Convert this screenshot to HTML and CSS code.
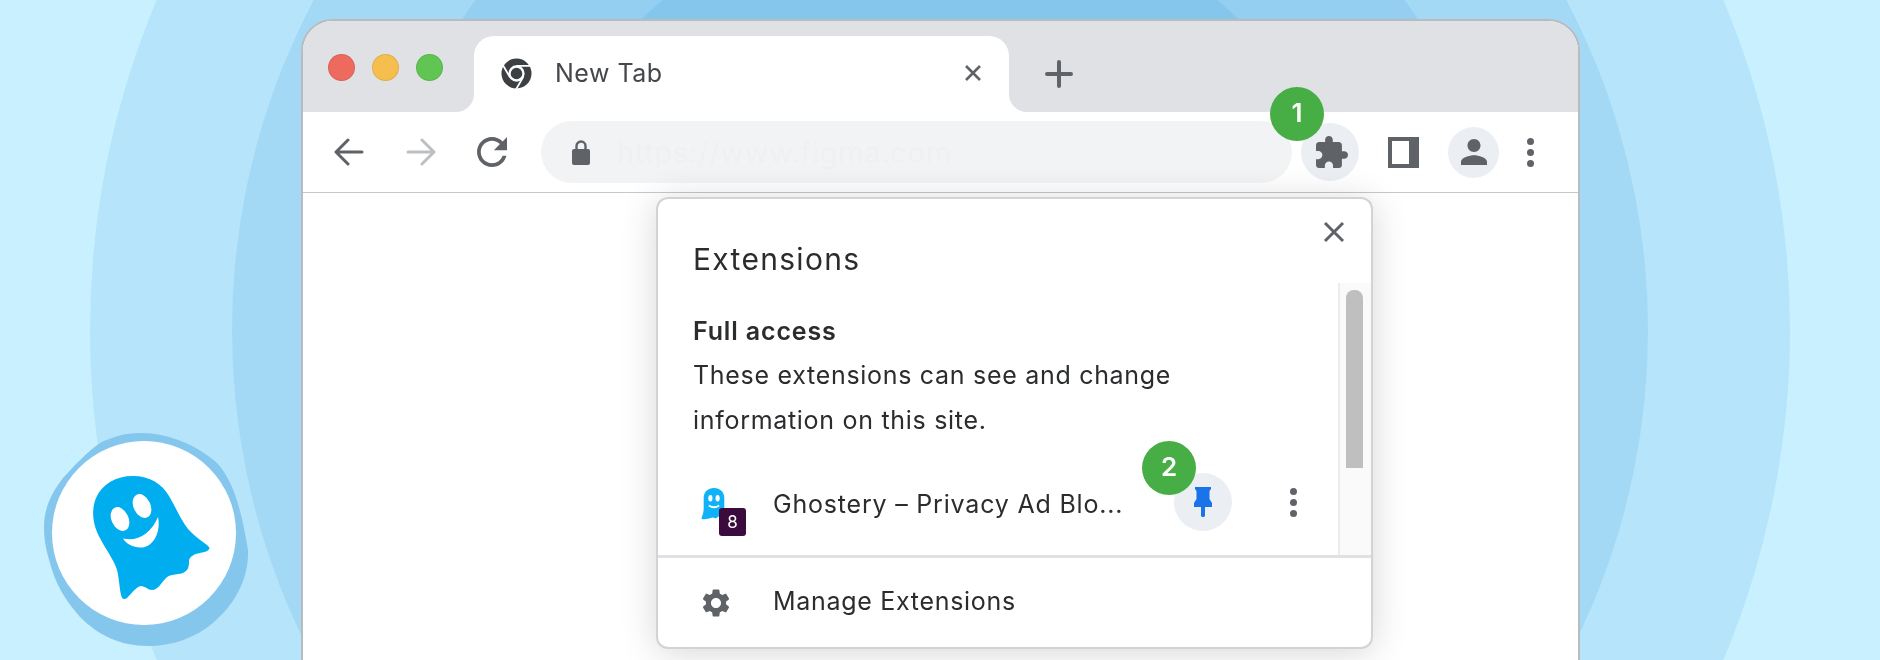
FILE: index.html
```html
<!DOCTYPE html>
<html lang="en">
<head>
    <meta charset="UTF-8">
    <title>Pin Ghostery in Chrome</title>
    <link rel="stylesheet" href="styles.css">
</head>
<body>
    <div class="ring ring-1"></div>
    <div class="ring ring-2"></div>
    <div class="ring ring-3"></div>
    <div class="ring ring-4"></div>

    <div class="window">
        <div class="tabstrip">
            <div class="lights">
                <span class="light light-red"></span>
                <span class="light light-yellow"></span>
                <span class="light light-green"></span>
            </div>
            <div class="tab-wrap">
                <div class="tab">
                    <svg class="chrome-icon" viewBox="0 0 32 32">
                        <circle cx="16" cy="16" r="15.5" fill="#3c4043"/>
                        <circle cx="16" cy="16" r="7.2" fill="#3c4043" stroke="#fff" stroke-width="2.4"/>
                        <g stroke="#fff" stroke-width="1.8">
                            <path d="M16 8.2H31"/>
                            <path d="M16 8.2H31" transform="rotate(120 16 16)"/>
                            <path d="M16 8.2H31" transform="rotate(240 16 16)"/>
                        </g>
                    </svg>
                    <span class="tab-title">New Tab</span>
                    <svg class="tab-close" viewBox="0 0 18 18"><path d="M2 2L16 16M16 2L2 16" stroke="#5f6368" stroke-width="2.6"/></svg>
                </div>
            </div>
            <div class="strip-rest">
                <svg class="new-tab" viewBox="0 0 28 28"><path d="M14 2V26M2 14H26" stroke="#5f6368" stroke-width="4" stroke-linecap="round"/></svg>
            </div>
        </div>

        <div class="toolbar">
            <svg class="nav-arrow" viewBox="0 0 30 28"><path d="M28 14H3M14 2L2 14L14 26" fill="none" stroke="#5f6368" stroke-width="3" stroke-linecap="round" stroke-linejoin="round"/></svg>
            <svg class="nav-arrow nav-forward" viewBox="0 0 30 28"><path d="M2 14H27M16 2L28 14L16 26" fill="none" stroke="#bdbfc1" stroke-width="3" stroke-linecap="round" stroke-linejoin="round"/></svg>
            <svg class="nav-reload" viewBox="4 4 16 16"><path fill="#5f6368" d="M17.65 6.35C16.2 4.9 14.21 4 12 4c-4.42 0-7.99 3.58-7.99 8s3.57 8 7.99 8c3.73 0 6.84-2.55 7.73-6h-2.08c-.82 2.33-3.04 4-5.65 4-3.31 0-6-2.69-6-6s2.69-6 6-6c1.66 0 3.14.69 4.22 1.78L13 11h7V4l-2.35 2.35z"/></svg>
            <div class="omnibox">
                <svg class="lock" viewBox="0 0 18 25"><path fill="#5f6368" d="M2 9h14a2 2 0 0 1 2 2v12a2 2 0 0 1-2 2H2a2 2 0 0 1-2-2V11a2 2 0 0 1 2-2z"/><path fill="none" stroke="#5f6368" stroke-width="2.4" d="M4.5 10V6a4.500 4.500 0 0 1 9 0v4"/></svg>
                <span class="url">https://www.figma.com</span>
            </div>
            <div class="round-btn puzzle-btn">
                <svg class="puzzle" viewBox="2 1 21 21"><path fill="#5f6368" d="M20.500 11H19V7c0-1.100-.9-2-2-2h-4V3.500C13 2.120 11.880 1 10.500 1S8 2.120 8 3.500V5H4c-1.100 0-1.990.9-1.990 2v3.800H3.500c1.490 0 2.700 1.210 2.700 2.700s-1.210 2.700-2.700 2.700H2V20c0 1.100.9 2 2 2h3.800v-1.500c0-1.490 1.210-2.700 2.700-2.700 1.490 0 2.700 1.210 2.700 2.700V22H17c1.100 0 2-.9 2-2v-4h1.500c1.380 0 2.500-1.120 2.500-2.500S21.880 11 20.500 11z"/></svg>
                <span class="step step-toolbar">1</span>
            </div>
            <div class="side-panel"></div>
            <div class="round-btn profile-btn">
                <svg class="person" viewBox="4 4 16 16"><path fill="#5f6368" d="M12 12c2.210 0 4-1.790 4-4s-1.790-4-4-4-4 1.790-4 4 1.790 4 4 4zm0 2c-2.670 0-8 1.340-8 4v2h16v-2c0-2.660-5.330-4-8-4z"/></svg>
            </div>
            <div class="dots toolbar-dots"><i></i><i></i><i></i></div>
        </div>

        <div class="popup">
            <svg class="popup-close" viewBox="0 0 22 22"><path d="M2 2L20 20M20 2L2 20" stroke="#5f6368" stroke-width="3"/></svg>
            <h2 class="popup-title">Extensions</h2>
            <div class="popup-scroll">
                <div class="popup-list">
                    <div class="section-title">Full access</div>
                    <p class="section-text">These extensions can see and change<br>information on this site.</p>
                    <div class="ext-row">
                        <div class="ext-icon">
                            <svg class="mini-ghost" viewBox="0 0 24 32">
                                <path fill="#0fb1f7" d="M12 0c6 0 10 4 10 10v11c0 2 2 3 2 5-2 1-4-1-6 0-2 2-3 4-6 3-2-1-4 1-7 1-3 0-5 1-5-1 1-3 2-5 2-10V10C2 4 6 0 12 0z"/>
                                <ellipse cx="8.500" cy="10" rx="2" ry="3.200" fill="#fff"/>
                                <ellipse cx="15.500" cy="10" rx="2" ry="3.200" fill="#fff"/>
                                <path d="M7 17c3 2 7 2 10 0" fill="none" stroke="#fff" stroke-width="1.800"/>
                            </svg>
                            <span class="ext-badge">8</span>
                        </div>
                        <span class="ext-name">Ghostery – Privacy Ad Blo...</span>
                        <div class="round-btn pin-btn">
                            <svg class="pin" viewBox="0 0 18 30"><path fill="#1a73e8" d="M1 0H17V2L15.500 4V12L18 16V20H11V29L10 30H8L7 29V20H0V16L2.500 12V4L1 2z"/></svg>
                            <span class="step step-pin">2</span>
                        </div>
                        <div class="dots row-dots"><i></i><i></i><i></i></div>
                    </div>
                </div>
                <div class="scroll-track"><div class="scroll-thumb"></div></div>
            </div>
            <div class="popup-footer">
                <svg class="gear" viewBox="2 2 20 20"><path fill="#5f6368" d="M19.140 12.940c.04-.3.06-.61.06-.94 0-.32-.02-.64-.07-.94l2.030-1.580c.18-.14.23-.41.12-.61l-1.920-3.320c-.12-.22-.37-.29-.59-.22l-2.390.96c-.5-.38-1.030-.7-1.620-.94l-.36-2.540c-.04-.24-.24-.41-.48-.41h-3.840c-.24 0-.43.17-.47.41l-.36 2.540c-.59.24-1.130.57-1.620.94l-2.390-.96c-.22-.08-.47 0-.59.22L2.740 8.870c-.12.21-.08.47.12.61l2.030 1.580c-.05.3-.09.63-.09.94s.02.64.07.94l-2.030 1.580c-.18.14-.23.41-.12.61l1.920 3.320c.12.22.37.29.59.22l2.390-.96c.5.38 1.030.7 1.620.94l.36 2.540c.05.24.24.41.48.41h3.840c.24 0 .44-.17.47-.41l.36-2.540c.59-.24 1.130-.56 1.620-.94l2.390.96c.22.08.47 0 .59-.22l1.920-3.320c.12-.22.07-.47-.12-.61l-2.010-1.580zM12 15.600c-1.980 0-3.600-1.620-3.600-3.600s1.620-3.600 3.600-3.600 3.600 1.620 3.600 3.600-1.620 3.600-3.600 3.600z"/></svg>
                <span class="footer-label">Manage Extensions</span>
            </div>
        </div>
    </div>

    <svg class="logo" viewBox="0 0 240 240">
        <path fill="#85c6ec" d="M120 13C150 13 178 26 197 43C215 62 222 95 228 130C229 160 214 185 193 203C175 218 152 226 128 226C100 226 78 215 60 197C45 180 35 163 30 143C26 130 24 120 24 107C24 88 32 72 43 58C55 45 66 33 80 23C92 17 105 13 120 13z"/>
        <circle cx="124" cy="113" r="92" fill="#fff"/>
        <path fill="#00aef0" d="M113 56C130 56 142 64 149 76C156 88 161 100 168 109C175 117 184 122 189 127C191 130 186 132 180 133C174 134 171 136 169 140C169 146 169 150 163 153C156 155 150 154 146 158C141 163 138 170 132 170C128 170 125 166 121 166C116 167 112 173 107 178C104 180 102 179 101 175C99 165 99 155 96 147C91 135 82 124 77 112C72 100 72 88 76 78C82 64 96 56 113 56z"/>
        <ellipse cx="100" cy="99" rx="8.500" ry="12.500" fill="#fff" transform="rotate(-25 100 99)"/>
        <ellipse cx="122" cy="86" rx="8.500" ry="12.500" fill="#fff" transform="rotate(-25 122 86)"/>
        <path fill="#fff" d="M103 118.500C117 122 131 114 138 97C141 112 134 124 125 127C116 129 107 125 103 118.500z"/>
    </svg>
</body>
</html>
```

FILE: styles.css
```css
html, body {
    margin: 0;
    height: 660px;
    overflow: hidden;
}
body {
    position: relative;
    background-color: #c9f0ff;
    font-family: Inter, Arial, sans-serif;
    color: #2b2c2e;
}

/* concentric circles behind the window */
.ring {
    position: absolute;
    left: 50%;
    top: 330px;
    border-radius: 50%;
    transform: translate(-50%, -50%);
}
.ring-1 { width: 1700px; height: 1700px; background-color: #b6e4fb; }
.ring-2 { width: 1416px; height: 1416px; background-color: #a3d9f5; }
.ring-3 { width: 1140px; height: 1140px; background-color: #94cff1; }
.ring-4 { width: 862px; height: 862px; background-color: #84c6ec; }

.window {
    position: relative;
    box-sizing: border-box;
    width: 1279px;
    height: 720px;
    margin: 19px 0 0 301px;
    background-color: white;
    border: 2px solid #b9bcbe;
    border-radius: 32px 32px 0 0;
    filter: blur(0.4px);
}

.tabstrip {
    display: flex;
    height: 91px;
    border-radius: 30px 30px 0 0;
    overflow: hidden;
}
.lights {
    display: flex;
    align-items: center;
    gap: 17px;
    box-sizing: border-box;
    width: 171px;
    padding: 0 0 0 25px;
    background-color: #dfe1e5;
    border-bottom-right-radius: 18px;
}
.light {
    width: 27px;
    height: 27px;
    border-radius: 50%;
    box-sizing: border-box;
    border: 1px solid rgba(0,0,0,0.08);
    margin-top: 1px;
}
.light-red { background-color: #ee6a5f; }
.light-yellow { background-color: #f6bd4f; }
.light-green { background-color: #61c554; }

.tab-wrap {
    width: 535px;
    padding-top: 15px;
    background-color: #dfe1e5;
}
.tab {
    display: flex;
    align-items: center;
    height: 76px;
    background-color: white;
    border-radius: 20px 20px 0 0;
}
.chrome-icon {
    width: 31px;
    height: 31px;
    margin: -1px 0 0 27px;
}
.tab-title {
    margin: -2px 0 0 23px;
    font-size: 25px;
    letter-spacing: 0.5px;
    color: #45474b;
}
.tab-close {
    width: 18px;
    height: 18px;
    margin: -2px 0 0 auto;
    margin-right: 27px;
}
.strip-rest {
    flex: 1;
    display: flex;
    align-items: center;
    padding: 0 0 0 36px;
    background-color: #dfe1e5;
    border-bottom-left-radius: 18px;
}
.new-tab {
    width: 28px;
    height: 28px;
    margin-top: 15px;
}

.toolbar {
    display: flex;
    align-items: center;
    box-sizing: border-box;
    height: 81px;
    padding-left: 31px;
    border-bottom: 1.5px solid #c5c7c9;
}
.nav-arrow {
    width: 30px;
    height: 28px;
}
.nav-forward {
    margin-left: 42px;
}
.nav-reload {
    width: 30px;
    height: 30px;
    margin-left: 41px;
}
.omnibox {
    display: flex;
    align-items: center;
    box-sizing: border-box;
    width: 751px;
    height: 62px;
    margin-left: 34px;
    padding-left: 31px;
    background-color: #f1f3f4;
    border-radius: 31px;
}
.lock {
    width: 18px;
    height: 25px;
}
.url {
    margin-left: 27px;
    font-size: 29px;
    letter-spacing: 0.7px;
    color: #eff0f2;
}
.round-btn {
    position: relative;
    display: flex;
    align-items: center;
    justify-content: center;
    border-radius: 50%;
    background-color: #ebeff3;
}
.puzzle-btn {
    width: 58px;
    height: 58px;
    margin-left: 9px;
}
.puzzle {
    width: 32px;
    height: 32px;
    margin-left: 4px;
}
.side-panel {
    box-sizing: border-box;
    width: 31px;
    height: 31px;
    margin-left: 29px;
    border: solid #5f6368;
    border-width: 4px 10px 4px 4px;
}
.profile-btn {
    width: 51px;
    height: 51px;
    margin-left: 29px;
}
.person {
    width: 26px;
    height: 26px;
}
.dots {
    display: flex;
    flex-direction: column;
    gap: 4px;
}
.dots i {
    width: 7px;
    height: 7px;
    border-radius: 50%;
    background-color: #5f6368;
}
.toolbar-dots {
    margin-left: 28px;
}
.step {
    position: absolute;
    width: 54px;
    height: 54px;
    line-height: 52px;
    text-align: center;
    border-radius: 50%;
    background-color: #46ae45;
    color: white;
    font-size: 26px;
    font-weight: 600;
}
.step-toolbar {
    left: -31px;
    top: -36px;
}
.step-pin {
    left: -32px;
    top: -32px;
}

/* extensions menu */
.popup {
    position: absolute;
    left: 353px;
    top: 176px;
    box-sizing: border-box;
    width: 717px;
    height: 452px;
    display: flex;
    flex-direction: column;
    background-color: white;
    border: 2px solid #d2d3d5;
    border-radius: 12px;
    box-shadow: 0 4px 36px rgba(0,0,0,0.16);
}
.popup-close {
    position: absolute;
    right: 26px;
    top: 22px;
    width: 22px;
    height: 22px;
}
.popup-title {
    box-sizing: border-box;
    height: 84px;
    margin: 0;
    padding: 40px 0 0 35px;
    font-size: 30px;
    font-weight: 400;
    line-height: 40px;
    letter-spacing: 1.3px;
}
.popup-scroll {
    display: flex;
    height: 272px;
}
.popup-list {
    flex: 1;
    padding: 0 0 0 35px;
}
.section-title {
    margin-top: 31px;
    font-size: 25px;
    font-weight: 600;
    line-height: 34px;
    letter-spacing: 0.85px;
}
.section-text {
    margin: 5px 0 0;
    font-size: 25px;
    line-height: 45px;
    letter-spacing: 0.7px;
}
.ext-row {
    display: flex;
    align-items: center;
    height: 58px;
    margin-top: 30px;
}
.ext-icon {
    position: relative;
    width: 80px;
    height: 48px;
}
.mini-ghost {
    position: absolute;
    left: 8px;
    top: 10px;
    width: 26px;
    height: 33px;
}
.ext-badge {
    position: absolute;
    left: 26px;
    top: 30px;
    width: 27px;
    height: 28px;
    line-height: 28px;
    text-align: center;
    border-radius: 3px;
    background-color: #3b0b3d;
    color: white;
    font-size: 17px;
}
.ext-name {
    width: 401px;
    padding-top: 3px;
    font-size: 25px;
    letter-spacing: 0.8px;
    white-space: nowrap;
}
.pin-btn {
    width: 58px;
    height: 58px;
}
.pin {
    width: 18px;
    height: 30px;
}
.row-dots {
    margin-left: 58px;
}
.scroll-track {
    box-sizing: border-box;
    width: 33px;
    padding: 7px 8px 0 6px;
    background-color: #fafafa;
    border-left: 2px solid #ececec;
}
.scroll-thumb {
    height: 178px;
    background-color: #bfbfbf;
    border-radius: 8px 8px 0 0;
}
.popup-footer {
    flex: 1;
    display: flex;
    align-items: center;
    padding-left: 44px;
    border-top: 3px solid #e0e1e5;
}
.gear {
    width: 28px;
    height: 28px;
}
.footer-label {
    margin: -3px 0 0 43px;
    font-size: 25px;
    letter-spacing: 0.7px;
}

.logo {
    position: absolute;
    left: 20px;
    top: 420px;
    width: 240px;
    height: 240px;
}
```
